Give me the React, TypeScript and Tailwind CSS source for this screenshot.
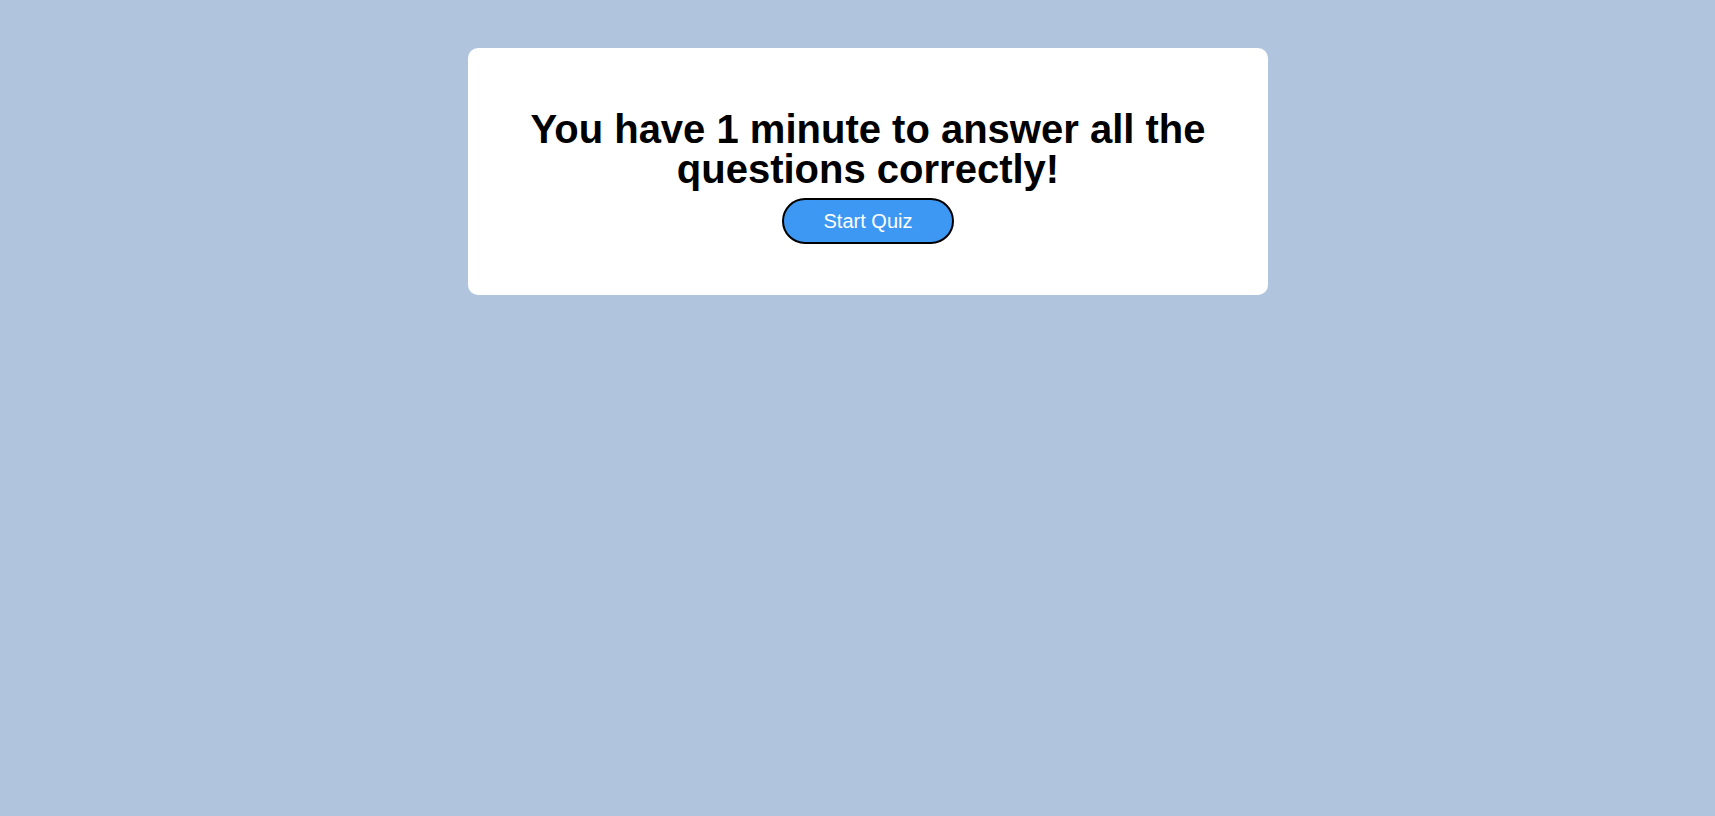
export default function App() {
  return (
    <div className="min-h-screen w-full bg-[#b0c4de] pt-[48px] pl-[21px]" style={{ fontFamily: '"Liberation Sans", Arial, sans-serif' }}>
      <div className="mx-auto flex w-[800px] flex-col items-center rounded-[10px] bg-white pt-[61px] pb-[51px]">
        <h1 className="w-[700px] text-center text-[40px] font-bold leading-[40px] text-black">
          You have 1 minute to answer all the questions correctly!
        </h1>
        <button className="mt-[9px] h-[46px] w-[172px] rounded-full border-2 border-black bg-[#3d98f4] text-[20px] text-white">
          Start Quiz
        </button>
      </div>
    </div>
  );
}
